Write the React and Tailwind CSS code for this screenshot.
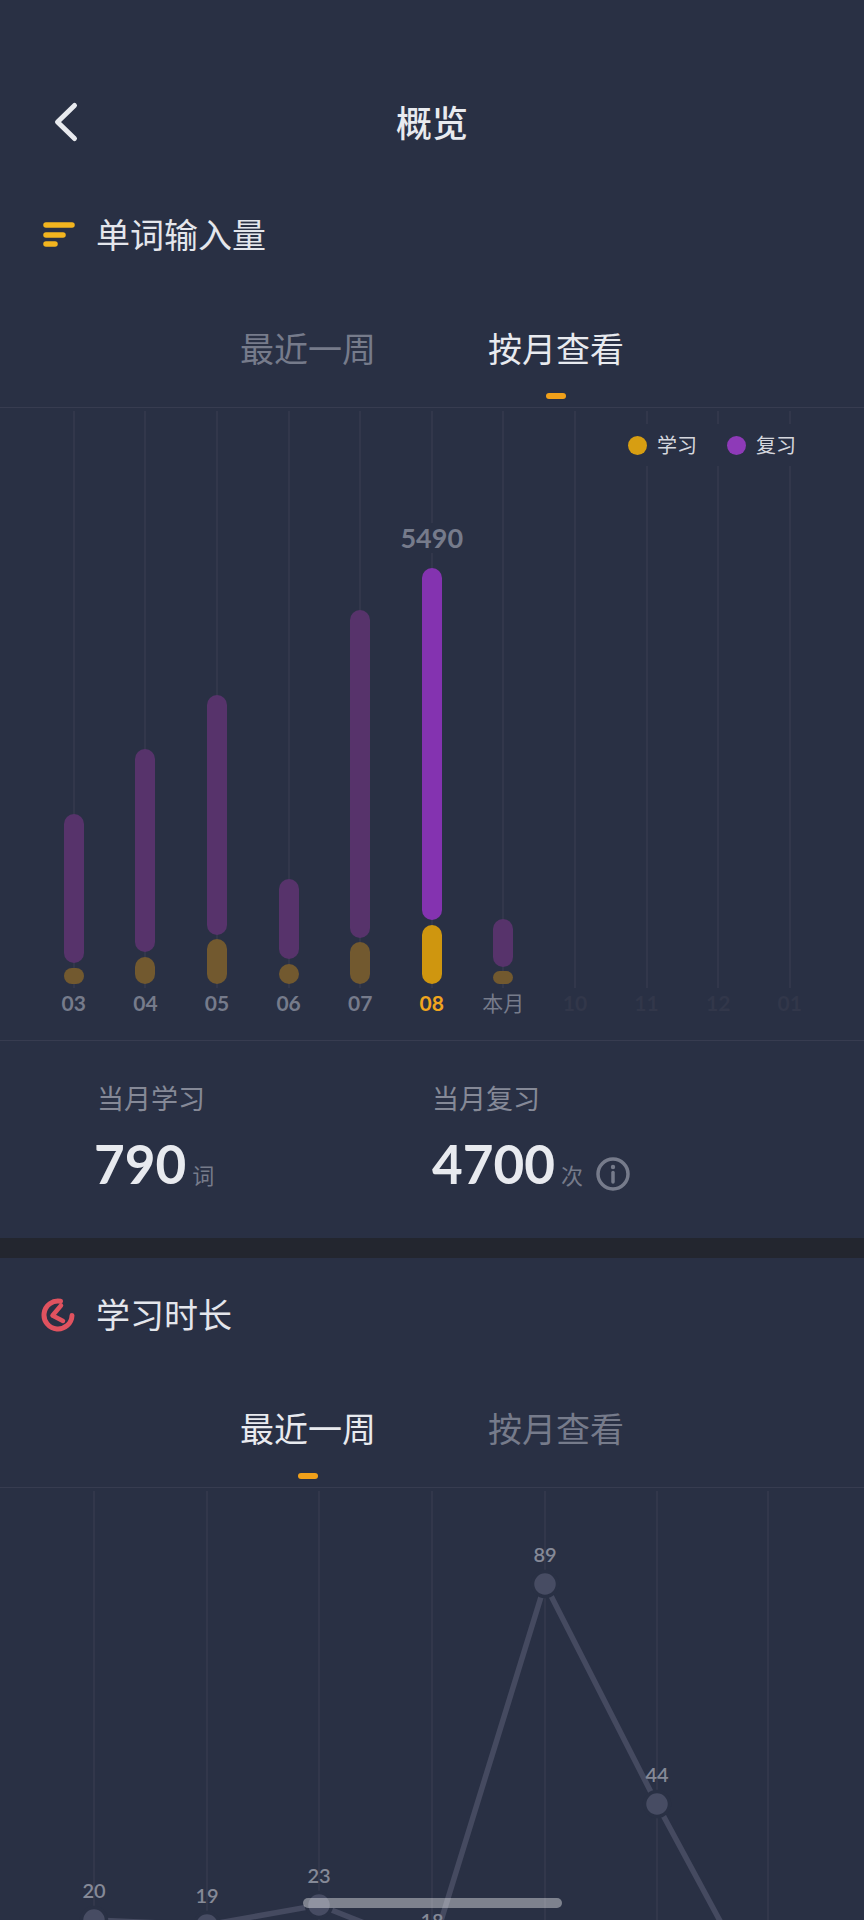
const months = [
  { label: '03', review: 149, gap: 5, learn: 16 },
  { label: '04', review: 203, gap: 5, learn: 27 },
  { label: '05', review: 240, gap: 4, learn: 45 },
  { label: '06', review: 80, gap: 5, learn: 20 },
  { label: '07', review: 328, gap: 4, learn: 42 },
  { label: '08', review: 352, gap: 5, learn: 59, active: true, total: 5490 },
  { label: '本月', review: 48, gap: 4, learn: 13 },
  { label: '10', future: true },
  { label: '11', future: true },
  { label: '12', future: true },
  { label: '01', future: true },
]

const points = [
  { x: 94, y: 1919, v: 20 },
  { x: 207, y: 1924, v: 19 },
  { x: 319, y: 1904, v: 23 },
  { x: 432, y: 1949, v: 18 },
  { x: 545, y: 1583, v: 89 },
  { x: 657, y: 1803, v: 44 },
  { x: 768, y: 2009 },
]

function SectionTitle({ icon, children }) {
  return (
    <div className="flex h-[60px] items-center">
      <div className="flex w-[97px] justify-start pl-[41px]">{icon}</div>
      <h2 className="-ml-px text-[34px] leading-none text-[#e4e6ec]">{children}</h2>
    </div>
  )
}

function Tabs({ active }) {
  const items = ['最近一周', '按月查看']
  return (
    <div className="mt-[59px] flex justify-center gap-[113px] border-b border-[#373c50] pb-[8px]">
      {items.map((item, i) => (
        <div key={item} className="flex w-[135px] flex-col items-center">
          <div className={`h-[50px] text-[34px] leading-[50px] whitespace-nowrap ${i === active ? 'text-[#e8eaef]' : 'text-[#767b8b]'}`}>
            {item}
          </div>
          <div className={`mt-[19px] h-[6px] w-[20px] rounded-full ${i === active ? 'bg-[#f0a01a]' : 'bg-transparent'}`} />
        </div>
      ))}
    </div>
  )
}

function FilterIcon() {
  return (
    <svg width="32" height="26" viewBox="0 0 32 26" className="ml-[2px]">
      <g stroke="#f3b51f" strokeWidth="5.5" strokeLinecap="round">
        <line x1="3" y1="3" x2="29" y2="3" />
        <line x1="3" y1="13" x2="20" y2="13" />
        <line x1="3" y1="22" x2="12" y2="22" />
      </g>
    </svg>
  )
}

function ClockIcon() {
  return (
    <svg width="34" height="34" viewBox="0 0 34 34" fill="none" stroke="#e0525f" strokeWidth="5" strokeLinecap="round" strokeLinejoin="round">
      <path d="M19.5 3.2A14 14 0 1 0 31 17.5" />
      <path d="M20 7.5L11.5 17.5L22 23" strokeWidth="4.5" />
    </svg>
  )
}

function MonthColumn({ m }) {
  return (
    <div className="relative flex h-[577px] w-[71.6px] flex-col items-center">
      <div className="absolute top-0 bottom-0 left-1/2 w-[2px] -translate-x-1/2 bg-[#32374b]" />
      <div className="relative flex flex-1 flex-col items-center justify-end pb-[4px]">
        {m.total && (
          <div className="mb-[15px] bg-[#293044] text-[27px] leading-[30px] font-bold text-[#767b8b]">{m.total}</div>
        )}
        {!m.future && (
          <>
            <div
              className={`w-[20px] rounded-full ${m.active ? 'bg-[#8433b0]' : 'bg-[#57336b]'}`}
              style={{ height: m.review, marginBottom: m.gap }}
            />
            <div
              className={`w-[20px] rounded-full ${m.active ? 'bg-[#cf960f]' : 'bg-[#72592f]'}`}
              style={{ height: m.learn }}
            />
          </>
        )}
      </div>
    </div>
  )
}

function MonthLabel({ m }) {
  let color = 'text-[#767b8b]'
  if (m.active) color = 'text-[#f0a51e]'
  if (m.future) color = 'text-[#32374a]'
  return (
    <div className={`w-[71.6px] text-center text-[21px] leading-[30px] font-bold ${color} ${m.label === '本月' ? 'font-normal' : ''}`}>
      {m.label}
    </div>
  )
}

function Stat({ label, value, unit, info, className }) {
  return (
    <div className={className}>
      <div className="h-[40px] text-[27px] leading-[40px] text-[#858997]">{label}</div>
      <div className={`mt-[15px] flex items-baseline ${info ? '' : '-ml-[3px]'}`}>
        <span className="text-[53px] leading-[60px] font-bold text-[#e8eaef]">{value}</span>
        <span className="ml-[6px] text-[22px] leading-none text-[#767b8b]">{unit}</span>
        {info && (
          <svg width="34" height="34" viewBox="0 0 34 34" fill="none" className="ml-[13px] translate-y-[7px]">
            <circle cx="17" cy="17" r="15" stroke="#767b8b" strokeWidth="3.5" />
            <circle cx="17" cy="10" r="2.2" fill="#767b8b" />
            <line x1="17" y1="15.5" x2="17" y2="25" stroke="#767b8b" strokeWidth="3.5" strokeLinecap="round" />
          </svg>
        )}
      </div>
    </div>
  )
}

function LineChart() {
  const grid = [94, 207, 319, 432, 545, 657, 768]
  return (
    <svg width="864" height="433" viewBox="0 1487 864 433" className="block">
      {grid.map((x) => (
        <line key={x} x1={x} y1="1490" x2={x} y2="1920" stroke="#32374b" strokeWidth="2" />
      ))}
      <polyline
        points={points.map((p) => `${p.x},${p.y}`).join(' ')}
        fill="none"
        stroke="#454a60"
        strokeWidth="5.5"
      />
      {points.map((p) => (
        <g key={p.x}>
          <circle cx={p.x} cy={p.y} r="12.5" fill="#474c63" stroke="#293044" strokeWidth="3.5" />
          {p.v && (
            <text x={p.x} y={p.y - 22} textAnchor="middle" fontSize="20" fontWeight="600" fill="#858997">
              {p.v}
            </text>
          )}
        </g>
      ))}
    </svg>
  )
}

export default function App() {
  return (
    <div className="relative h-[1920px] w-full overflow-hidden bg-[#293044] font-['Lato','Noto_Sans_CJK_SC',sans-serif]">
      {/* header */}
      <div className="relative flex h-[205px] items-start justify-center pt-[99px]">
        <svg width="26" height="44" viewBox="0 0 26 44" fill="none" className="absolute top-[100px] left-[53px]">
          <path d="M21.5 5.5L4.5 22L21.5 38.5" stroke="#e8eaef" strokeWidth="5" strokeLinecap="round" strokeLinejoin="round" />
        </svg>
        <h1 className="text-[36px] leading-[48px] font-medium text-[#e8eaef]">概览</h1>
      </div>

      <SectionTitle icon={<FilterIcon />}>单词输入量</SectionTitle>
      <Tabs active={1} />

      {/* bar chart */}
      <div className="relative pt-[3px] pl-[38px]">
        <div className="flex">
          {months.map((m) => (
            <MonthColumn key={m.label} m={m} />
          ))}
        </div>
        <div className="flex">
          {months.map((m) => (
            <MonthLabel key={m.label} m={m} />
          ))}
        </div>
        <div className="absolute top-[16px] left-[620px] flex h-[42px] w-[185px] items-center bg-[#293044] pl-[8px] text-[20px] text-[#d5d7de]">
          <span className="h-[19px] w-[19px] rounded-full bg-[#d79e12]" />
          <span className="ml-[10px] leading-none">学习</span>
          <span className="ml-[30px] h-[19px] w-[19px] rounded-full bg-[#8e3ab8]" />
          <span className="ml-[10px] leading-none">复习</span>
        </div>
      </div>

      {/* month totals */}
      <div className="mt-[22px] flex h-[198px] border-t border-[#373c50] pt-[38px]">
        <Stat label="当月学习" value="790" unit="词" className="ml-[97px] w-[335px]" />
        <Stat label="当月复习" value="4700" unit="次" info />
      </div>
      <div className="h-[20px] bg-[#23262f]" />

      <div className="pt-[27px]">
        <SectionTitle icon={<ClockIcon />}>学习时长</SectionTitle>
        <Tabs active={0} />
        <LineChart />
      </div>

      {/* home indicator */}
      <div className="absolute top-[1898px] left-[303px] h-[10px] w-[259px] rounded-full bg-white/40" />
    </div>
  )
}
